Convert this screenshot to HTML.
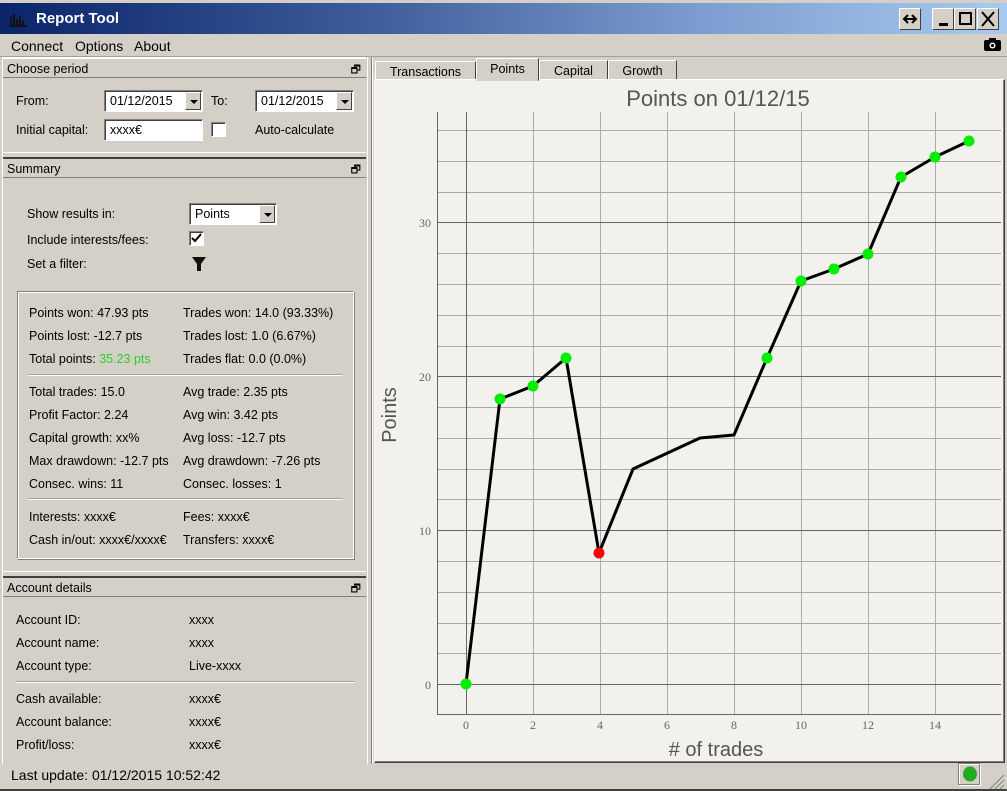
<!DOCTYPE html>
<html><head><meta charset="utf-8"><style>
*{margin:0;padding:0;box-sizing:border-box}
body{width:1007px;height:791px;background:#d4d0c8;font-family:"Liberation Sans",Tahoma,sans-serif;font-size:12.5px;color:#000;position:relative;overflow:hidden}
.a{position:absolute;white-space:nowrap}
.title{left:0;top:3px;width:1007px;height:31px;background:linear-gradient(90deg,#0a246a 0%,#3a5a98 35%,#7c9ed0 70%,#a6caf0 100%)}
.btn{position:absolute;top:5px;width:22px;height:22px;background:#d4d0c8;border:1px solid;border-color:#fff #404040 #404040 #fff;font-size:16px;text-align:center;line-height:20px}
.hdr{left:3px;width:363px;height:21px;border-bottom:1px solid #808080;border-top:2px solid #fff;padding:3px 0 0 4px}
.hdr .f{position:absolute;right:5px;top:2px;font-size:11px}
.combo{position:absolute;background:#fff;border:1px solid;border-color:#808080 #fff #fff #808080;box-shadow:inset 1px 1px 0 #404040;padding:3px 0 0 5px;height:22px}
.combo .ar{position:absolute;right:1px;top:1px;width:16px;height:18px;background:#d4d0c8;border:1px solid;border-color:#fff #404040 #404040 #fff}
.combo .ar:after{content:"";position:absolute;left:4px;top:7px;border:4px solid transparent;border-top:4px solid #000;border-bottom:0}
.cb{position:absolute;width:15px;height:15px;background:#fff;border:1px solid;border-color:#808080 #fff #fff #808080;box-shadow:inset 1px 1px 0 #404040}
.sep{position:absolute;height:2px;border-top:1px solid #a0a0a0;border-bottom:1px solid #fff}
.tab{position:absolute;top:60px;height:20px;border:1px solid;border-color:#fff #404040 transparent #fff;padding:3px 0 0 0;text-align:center;background:#d4d0c8}
</style></head><body>
<div class="a title"></div>
<svg class="a" style="left:8px;top:11px" width="20" height="16"><path d="M1 15h18M3 14V6M6 14V3M9 14V8M12 14V5M15 14V9" stroke="#111" stroke-width="2"/></svg>
<div class="a" style="left:36px;top:10px;color:#fff;font-weight:bold;font-size:15px">Report Tool</div>
<div class="btn" style="left:899px;top:8px">
<svg width="20" height="20"><path d="M5 10h10M8 6l-4 4 4 4M12 6l4 4-4 4" stroke="#000" stroke-width="2" fill="none"/></svg></div>
<div class="btn" style="left:932px;top:8px"><div style="position:absolute;left:6px;top:14px;width:9px;height:3px;background:#000"></div></div>
<div class="btn" style="left:954px;top:8px"><div style="position:absolute;left:4px;top:3px;width:13px;height:13px;border:2px solid #000;border-top-width:2px"></div></div>
<div class="btn" style="left:977px;top:8px"><svg width="20" height="20"><path d="M4 3l12 14M16 3L4 17" stroke="#000" stroke-width="2"/></svg></div>

<div class="a" style="left:11px;top:38px;font-size:14px">Connect</div>
<div class="a" style="left:75px;top:38px;font-size:14px">Options</div>
<div class="a" style="left:134px;top:38px;font-size:14px">About</div>
<svg class="a" style="left:984px;top:37px" width="17" height="14"><rect x="0" y="3" width="17" height="11" rx="2" fill="#000"/><rect x="5" y="1" width="7" height="4" fill="#000"/><circle cx="8.5" cy="8.5" r="3" fill="#fff"/><circle cx="8.5" cy="8.5" r="1.6" fill="#000"/></svg>
<div class="a" style="left:0;top:56px;width:1007px;height:1px;background:#a0a0a0"></div>

<div class="a" style="left:2px;top:57px;width:366px;height:707px;border-right:1px solid #fff;border-left:1px solid #fff"></div>

<div class="a hdr" style="top:57px">Choose period<span class="f">🗗</span></div>
<div class="a" style="left:16px;top:94px">From:</div>
<div class="combo" style="left:104px;top:90px;width:99px">01/12/2015<div class="ar"></div></div>
<div class="a" style="left:211px;top:94px">To:</div>
<div class="combo" style="left:255px;top:90px;width:99px">01/12/2015<div class="ar"></div></div>
<div class="a" style="left:16px;top:123px">Initial capital:</div>
<div class="combo" style="left:104px;top:119px;width:99px">xxxx€</div>
<div class="cb" style="left:211px;top:122px"></div>
<div class="a" style="left:255px;top:123px">Auto-calculate</div>

<div class="a" style="left:3px;top:152px;width:363px;height:2px;border-top:1px solid #fff"></div>
<div class="a hdr" style="top:157px;border-top:2px solid #404040">Summary<span class="f">🗗</span></div>
<div class="a" style="left:27px;top:207px">Show results in:</div>
<div class="combo" style="left:189px;top:203px;width:88px">Points<div class="ar"></div></div>
<div class="a" style="left:27px;top:233px">Include interests/fees:</div>
<div class="cb" style="left:189px;top:231px"><svg width="13" height="13" style="position:absolute;left:0;top:0"><path d="M2 6l3 3 6-7" stroke="#000" stroke-width="2" fill="none"/></svg></div>
<div class="a" style="left:27px;top:257px">Set a filter:</div>
<svg class="a" style="left:191px;top:256px" width="16" height="16"><path d="M1 1h14l-5 7v7h-4V8z" fill="#111"/></svg>

<div class="a" style="left:17px;top:291px;width:337px;height:268px;border:1px solid;border-color:#808080 #fff #fff #808080;box-shadow:inset 1px 1px 0 #fff,1px 1px 0 #808080"></div>
<div class="a" style="left:29px;top:306px">Points won: 47.93 pts</div>
<div class="a" style="left:183px;top:306px">Trades won: 14.0 (93.33%)</div>
<div class="a" style="left:29px;top:329px">Points lost: -12.7 pts</div>
<div class="a" style="left:183px;top:329px">Trades lost: 1.0 (6.67%)</div>
<div class="a" style="left:29px;top:352px">Total points: <span style="color:#2ecc2e">35.23 pts</span></div>
<div class="a" style="left:183px;top:352px">Trades flat: 0.0 (0.0%)</div>
<div class="sep" style="left:29px;top:374px;width:313px"></div>
<div class="a" style="left:29px;top:385px">Total trades: 15.0</div>
<div class="a" style="left:183px;top:385px">Avg trade: 2.35 pts</div>
<div class="a" style="left:29px;top:408px">Profit Factor: 2.24</div>
<div class="a" style="left:183px;top:408px">Avg win: 3.42 pts</div>
<div class="a" style="left:29px;top:431px">Capital growth: xx%</div>
<div class="a" style="left:183px;top:431px">Avg loss: -12.7 pts</div>
<div class="a" style="left:29px;top:454px">Max drawdown: -12.7 pts</div>
<div class="a" style="left:183px;top:454px">Avg drawdown: -7.26 pts</div>
<div class="a" style="left:29px;top:477px">Consec. wins: 11</div>
<div class="a" style="left:183px;top:477px">Consec. losses: 1</div>
<div class="sep" style="left:29px;top:498px;width:313px"></div>
<div class="a" style="left:29px;top:510px">Interests: xxxx€</div>
<div class="a" style="left:183px;top:510px">Fees: xxxx€</div>
<div class="a" style="left:29px;top:533px">Cash in/out: xxxx€/xxxx€</div>
<div class="a" style="left:183px;top:533px">Transfers: xxxx€</div>

<div class="a" style="left:3px;top:571px;width:363px;height:2px;border-top:1px solid #fff"></div>
<div class="a hdr" style="top:576px;border-top:2px solid #404040">Account details<span class="f">🗗</span></div>
<div class="a" style="left:16px;top:613px">Account ID:</div><div class="a" style="left:189px;top:613px">xxxx</div>
<div class="a" style="left:16px;top:636px">Account name:</div><div class="a" style="left:189px;top:636px">xxxx</div>
<div class="a" style="left:16px;top:659px">Account type:</div><div class="a" style="left:189px;top:659px">Live-xxxx</div>
<div class="sep" style="left:16px;top:681px;width:338px"></div>
<div class="a" style="left:16px;top:692px">Cash available:</div><div class="a" style="left:189px;top:692px">xxxx€</div>
<div class="a" style="left:16px;top:715px">Account balance:</div><div class="a" style="left:189px;top:715px">xxxx€</div>
<div class="a" style="left:16px;top:738px">Profit/loss:</div><div class="a" style="left:189px;top:738px">xxxx€</div>
<div class="a" style="left:11px;top:767px;font-size:14px">Last update: 01/12/2015 10:52:42</div>

<div class="a" style="left:371px;top:57px;width:636px;height:707px;border-left:1px solid #808080;box-shadow:inset 1px 0 0 #fff"></div>
<div class="tab" style="left:375px;width:101px;top:61px">Transactions</div>
<div class="tab" style="left:476px;width:63px;top:58px;height:23px;z-index:2">Points</div>
<div class="tab" style="left:539px;width:69px">Capital</div>
<div class="tab" style="left:608px;width:69px">Growth</div>
<div class="a" style="left:374px;top:79px;width:631px;height:684px;background:#f2f1ed;border:1px solid;border-color:#fff #404040 #404040 #fff;box-shadow:inset -1px -1px 0 #808080"></div>

<svg class="a" style="left:0;top:0" width="1007" height="791">
<text x="718" y="106" text-anchor="middle" font-family="Liberation Sans, sans-serif" font-size="22" fill="#555">Points on 01/12/15</text>
<g stroke="#aaa" stroke-width="1" fill="none">
<path d="M437 130.5H1001M437 161.5H1001M437 192.5H1001M437 253.5H1001M437 284.5H1001M437 315.5H1001M437 346.5H1001M437 407.5H1001M437 438.5H1001M437 469.5H1001M437 499.5H1001M437 561.5H1001M437 592.5H1001M437 623.5H1001M437 653.5H1001"/>
<path d="M533.5 112V714M600.5 112V714M667.5 112V714M734.5 112V714M801.5 112V714M868.5 112V714M935.5 112V714"/>
</g>
<g stroke="#666" stroke-width="1" fill="none">
<path d="M437 222.5H1001M437 376.5H1001M437 530.5H1001M437 684.5H1001M466.5 112V714"/>
<path d="M437.5 112V714.5H1001"/>
</g>
<g font-family="Liberation Serif, serif" font-size="12" fill="#666" text-anchor="end">
<text x="431" y="227">30</text><text x="431" y="381">20</text><text x="431" y="535">10</text><text x="431" y="689">0</text>
</g>
<g font-family="Liberation Serif, serif" font-size="12" fill="#666" text-anchor="middle">
<text x="466" y="729">0</text><text x="533" y="729">2</text><text x="600" y="729">4</text><text x="667" y="729">6</text><text x="734" y="729">8</text><text x="801" y="729">10</text><text x="868" y="729">12</text><text x="935" y="729">14</text>
</g>
<text x="716" y="756" text-anchor="middle" font-family="Liberation Sans, sans-serif" font-size="20" fill="#555"># of trades</text>
<text transform="translate(396,415) rotate(-90)" text-anchor="middle" font-family="Liberation Sans, sans-serif" font-size="20" fill="#555">Points</text>
<polyline fill="none" stroke="#000" stroke-width="3" stroke-linejoin="round" points="466,684 500,399 533,386 566,358 599,553 633,469 700,438 734,435 767,358 801,281 834,269 868,254 901,177 935,157 969,141"/>
<g fill="#00ee00">
<circle cx="466" cy="684" r="5.5"/><circle cx="500" cy="399" r="5.5"/><circle cx="533" cy="386" r="5.5"/><circle cx="566" cy="358" r="5.5"/><circle cx="767" cy="358" r="5.5"/><circle cx="801" cy="281" r="5.5"/><circle cx="834" cy="269" r="5.5"/><circle cx="868" cy="254" r="5.5"/><circle cx="901" cy="177" r="5.5"/><circle cx="935" cy="157" r="5.5"/><circle cx="969" cy="141" r="5.5"/>
</g>
<circle cx="599" cy="553" r="5.5" fill="#ff0000"/>
<rect x="959.5" y="764.5" width="21" height="21" fill="none" stroke="#fff"/>
<rect x="958.5" y="763.5" width="21" height="21" fill="none" stroke="#808080"/>
<ellipse cx="970" cy="774" rx="7" ry="7.5" fill="#22aa22"/>
<path d="M990 789L1004 775M995 789L1004 780M1000 789L1004 785" stroke="#808080" stroke-width="1"/>
</svg>
<div class="a" style="left:0;top:789px;width:1007px;height:2px;background:#404040"></div>
</body></html>
